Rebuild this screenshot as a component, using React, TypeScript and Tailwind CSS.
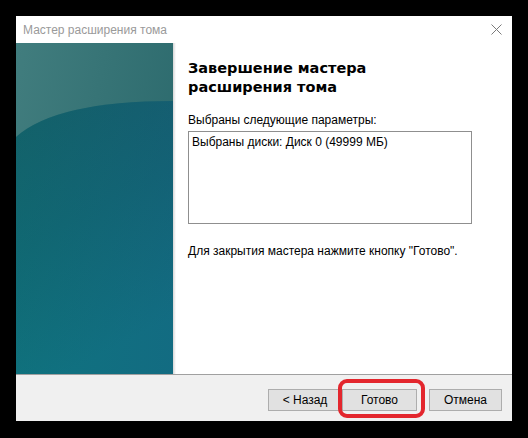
const ui = { fontFamily: '"Liberation Sans", Arial, sans-serif' };
const heading = { fontFamily: '"DejaVu Sans", Verdana, sans-serif' };

function SidePanel() {
  return (
    <div className="w-[157px] h-full shrink-0">
      <svg width="157" height="331" viewBox="0 0 157 331" className="block">
        <defs>
          <linearGradient id="top" x1="0" y1="0" x2="1" y2="0.4">
            <stop offset="0" stopColor="#417d7e" />
            <stop offset="1" stopColor="#2d6b6e" />
          </linearGradient>
          <linearGradient id="body" x1="0" y1="0" x2="0.3" y2="1">
            <stop offset="0" stopColor="#155861" />
            <stop offset="0.5" stopColor="#11626e" />
            <stop offset="1" stopColor="#10707f" />
          </linearGradient>
          <linearGradient id="tint" x1="0" y1="0" x2="1" y2="0">
            <stop offset="0" stopColor="#0e7a7e" stopOpacity="0.25" />
            <stop offset="1" stopColor="#1a5f8a" stopOpacity="0.25" />
          </linearGradient>
        </defs>
        <rect width="157" height="331" fill="url(#top)" />
        <path d="M0 94 Q40 58 157 58 L157 331 L0 331 Z" fill="url(#body)" />
        <path d="M0 94 Q40 58 157 58 L157 331 L0 331 Z" fill="url(#tint)" />
      </svg>
    </div>
  );
}

function Button({ label }: { label: string }) {
  return (
    <div className="h-[22px] w-full flex items-center justify-center bg-[#e1e1e1] border border-[#adadad] text-[12px] text-black">
      {label}
    </div>
  );
}

export default function App() {
  return (
    <div className="w-[528px] h-[438px] bg-black pt-[16px] pl-[16px]" style={ui}>
      <div className="w-[496px] h-[405px] bg-white flex flex-col">
        {/* title bar */}
        <div className="h-[27px] flex items-center justify-between pl-[7px] pr-[10px]">
          <span className="text-[12px] text-[#9a9a9a]">Мастер расширения тома</span>
          <svg width="11" height="11" viewBox="0 0 11 11" className="text-[#7a7a7a]">
            <path d="M0.5 0.5 L10.5 10.5 M10.5 0.5 L0.5 10.5" stroke="currentColor" strokeWidth="1" fill="none" />
          </svg>
        </div>

        {/* body */}
        <div className="h-[331px] flex">
          <SidePanel />
          <div className="w-[3px] h-full bg-gradient-to-r from-[#d6d6d6] to-white" />
          <div className="flex-1 pl-[12px] pt-[16px]">
            <h1 className="text-[14.5px] leading-[19px] font-bold text-black" style={heading}>
              Завершение мастера
              <br />
              расширения тома
            </h1>
            <p className="mt-[16px] text-[12px] leading-[14px] text-black">Выбраны следующие параметры:</p>
            <div className="mt-[4px] w-[284px] h-[93px] border border-[#8f8f8f] px-[3px] pt-[3px] text-[12px] leading-[14px] text-black">
              Выбраны диски: Диск 0 (49999 МБ)
            </div>
            <p className="mt-[20px] text-[12px] leading-[14px] text-black">
              Для закрытия мастера нажмите кнопку "Готово".
            </p>
          </div>
        </div>

        {/* footer */}
        <div className="h-[1px] bg-[#a0a0a0]" />
        <div className="flex-1 bg-[#f0f0f0] flex items-start pt-[14px] pl-[252px]">
          <div className="w-[74px]">
            <Button label="< Назад" />
          </div>
          <div className="w-[75px] relative">
            <Button label="Готово" />
            <div className="absolute -left-[4px] -right-[8px] -top-[10px] -bottom-[7px] border-4 border-[#e3262d] rounded-[9px]" />
          </div>
          <div className="w-[73px] ml-[12px]">
            <Button label="Отмена" />
          </div>
        </div>
      </div>
    </div>
  );
}
